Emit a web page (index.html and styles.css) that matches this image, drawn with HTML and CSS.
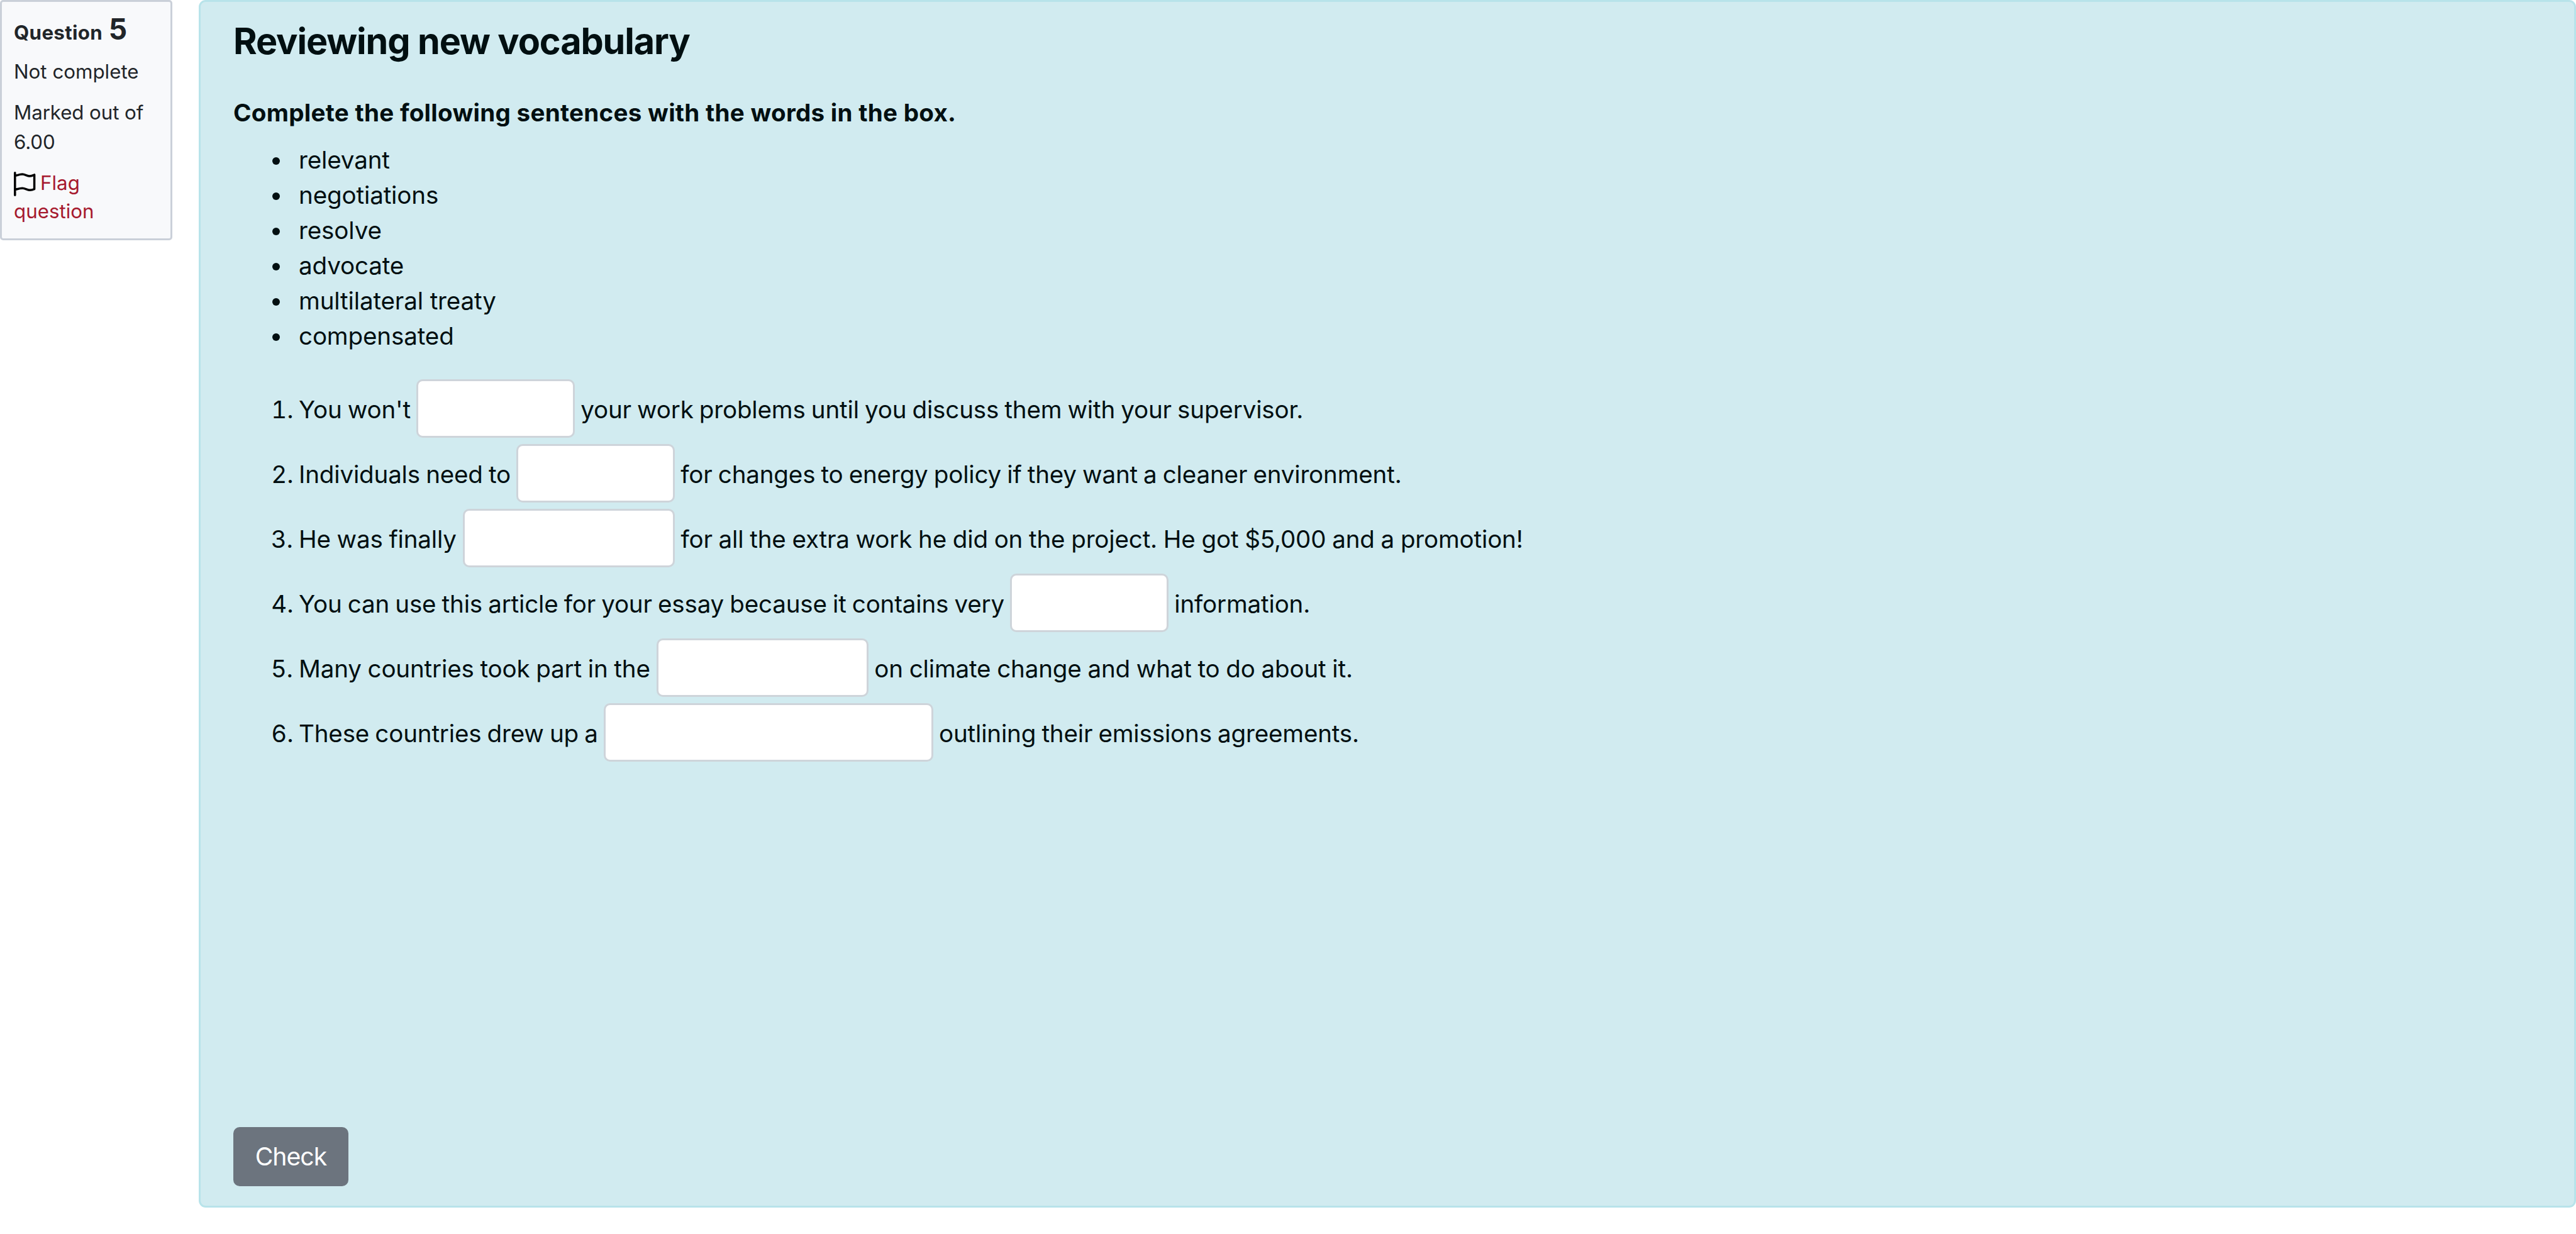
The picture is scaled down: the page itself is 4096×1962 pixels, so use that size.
FILE: index.html
```html
<!DOCTYPE html>
<html lang="en">
  <head>
    <meta charset="utf-8">
    <title>Reviewing new vocabulary</title>
    <link rel="stylesheet" href="styles.css">
  </head>
  <body>
    <div class="que">
      <div class="info">
        <h3 class="no">Question <span class="qno">5</span></h3>
        <div class="state">Not complete</div>
        <div class="grade">Marked out of 6.00</div>
        <div class="questionflag">
          <a class="flag-link"><svg class="flag-icon" viewBox="0 0 35 39"><path d="M1.8 1.8V37.2M1.8 6.6C6 5.6 9 4.1 13.5 4.1S21 7 25.5 7S30.5 5.6 32.6 4.8V27.6C30.5 28.6 29.5 29.2 25.5 29.2S18 26.3 13.5 26.3S6 27.6 1.8 28.6"/></svg>Flag question</a>
        </div>
      </div>
      <form class="formulation" action="">
        <h2 class="title">Reviewing new vocabulary</h2>
        <p class="instructions">Complete the following sentences with the words in the box.</p>
        <ul class="words">
          <li>relevant</li>
          <li>negotiations</li>
          <li>resolve</li>
          <li>advocate</li>
          <li>multilateral treaty</li>
          <li>compensated</li>
        </ul>
        <ol class="sentences">
          <li>You won't <input class="gap short" type="text"> your work problems until you discuss them with your supervisor.</li>
          <li>Individuals need to <input class="gap short" type="text"> for changes to energy policy if they want a cleaner environment.</li>
          <li class="loose">He was finally <input class="gap medium" type="text"> for all the extra work he did on the project. He got $5,000 and a promotion!</li>
          <li>You can use this article for your essay because it contains very <input class="gap short" type="text"> information.</li>
          <li class="loose">Many countries took part in the <input class="gap medium" type="text"> on climate change and what to do about it.</li>
          <li>These countries drew up a <input class="gap long" type="text"> outlining their emissions agreements.</li>
        </ol>
        <button class="check" type="button">Check</button>
      </form>
    </div>
  </body>
</html>
```

FILE: styles.css
```css
* { box-sizing: border-box; }
body { margin: 0; background: #fff; font-family: Inter, "Liberation Sans", Arial, sans-serif; }

.que { display: flex; align-items: flex-start; gap: 42px; }

/* question info box */
.info { width: 274px; height: 382px; flex: none; padding: 20px 15px 0 19px; background: #f8f9fb; border: 3px solid #cad0d9; border-radius: 5px; color: #212529; font-size: 31.3px; line-height: 47px; }
.no { margin: 0 0 16px; height: 52px; font-size: 31.3px; line-height: 46px; font-weight: 700; letter-spacing: 0.3px; }
.qno { margin-left: 2px; font-size: 46px; line-height: 46px; }
.state { margin-bottom: 18px; }
.grade { margin-bottom: 19px; letter-spacing: -0.1px; }
.questionflag { line-height: 44.6px; }
.flag-link { color: #a6192e; }
.flag-icon { width: 35px; height: 39px; margin-right: 7px; vertical-align: -9.5px; fill: none; stroke: #000; stroke-width: 3.5; stroke-linecap: round; stroke-linejoin: round; }

/* question body */
.formulation { flex: 1; height: 1920px; display: flex; flex-direction: column; padding: 28px 52px 31px; background: #d1ebf0; border: 3px solid #b8e3ea; border-radius: 11px; color: #010f11; font-size: 38.6px; line-height: 56px; }
.title { margin: 0 0 51px; font-size: 57.5px; line-height: 69px; font-weight: 700; letter-spacing: -1.1px; }
.instructions { margin: 0 0 20px; font-weight: 700; letter-spacing: 0.27px; }
.words { margin: 0 0 38px; padding-left: 93px; line-height: 55.9px; letter-spacing: -0.15px; }
.words li { padding-left: 11px; }
.sentences { margin: 0; padding-left: 104px; line-height: 103px; letter-spacing: -0.18px; word-spacing: -1.5px; }
.loose { word-spacing: -0.85px; }
.gap { height: 93px; margin: -5px 0 5px; padding: 0 20px; vertical-align: middle; font: inherit; line-height: 56px; background: #fff; border: 3px solid #ced4da; border-radius: 10px; }
.short { width: 252px; }
.medium { width: 337px; }
.long { width: 524px; }
.check { align-self: flex-start; width: 183px; height: 94px; margin-top: auto; padding: 0 0 1px; background: #6c747e; border: 0; border-radius: 10px; color: #fff; font-family: inherit; font-size: 39.2px; letter-spacing: -1px; }
```
